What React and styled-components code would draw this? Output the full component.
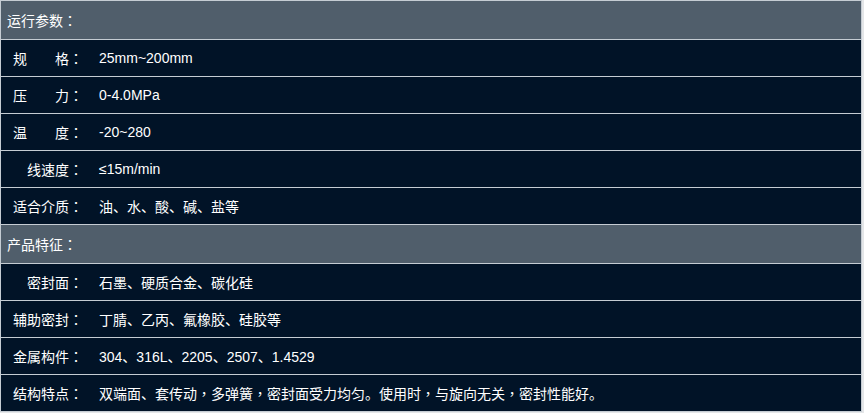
import React from 'react'
import styled, { createGlobalStyle } from 'styled-components'

const GlobalStyle = createGlobalStyle`
  html, body {
    margin: 0;
    padding: 0;
    background: #e4e6e8;
  }
  body {
    font-family: "Liberation Sans", "Noto Sans CJK SC", sans-serif;
    font-size: 14px;
  }
`

const sections = [
  {
    title: '运行参数',
    rows: [
      ['规　　格', '25mm~200mm'],
      ['压　　力', '0-4.0MPa'],
      ['温　　度', '-20~280'],
      ['线速度', '≤15m/min'],
      ['适合介质', '油、水、酸、碱、盐等'],
    ],
  },
  {
    title: '产品特征',
    rows: [
      ['密封面', '石墨、硬质合金、碳化硅'],
      ['辅助密封', '丁腈、乙丙、氟橡胶、硅胶等'],
      ['金属构件', '304、316L、2205、2507、1.4529'],
      ['结构特点', ['双端面、套传动', '，', '多弹簧', '，', '密封面受力均匀。使用时', '，', '与旋向无关', '，', '密封性能好。']],
    ],
  },
]

// centred full-width punctuation (colon, comma) as in the original page
const renderText = (parts) =>
  Array.isArray(parts)
    ? parts.map((p, i) => (i % 2 ? <Punct key={i}>{p}</Punct> : <span key={i}>{p}</span>))
    : parts

const App = () => {
  return (
    <>
      <GlobalStyle />
      <Table>
        {sections.map((s) => (
          <React.Fragment key={s.title}>
            <HeadRow>
              {s.title}
              <Punct>：</Punct>
            </HeadRow>
            {s.rows.map(([label, value]) => (
              <Row key={label}>
                <Label>
                  {label}
                  <Punct>：</Punct>
                </Label>
                <Value>{renderText(value)}</Value>
              </Row>
            ))}
          </React.Fragment>
        ))}
      </Table>
    </>
  )
}

export default App

const Table = styled.div`
  width: 862px;
  border: 1px solid #c5ccd3;
  border-bottom: none;
  box-sizing: border-box;
  background: #011327;
  color: #ffffff;
`

const HeadRow = styled.div`
  height: 38px;
  display: flex;
  align-items: center;
  padding-left: 6px;
  background: #505e6b;
  border-bottom: 1px solid #c5ccd3;

  & + & {
    height: 37px;
  }
`

const Row = styled.div`
  height: 36px;
  display: grid;
  grid-template-columns: 82px 1fr;
  column-gap: 16px;
  align-items: center;
  border-bottom: 1px solid #c5ccd3;
`

const Label = styled.span`
  text-align: right;
  white-space: nowrap;
`

const Value = styled.span`
  white-space: nowrap;
`

const Punct = styled.span`
  font-family: "Noto Sans CJK TC", "Noto Sans CJK SC", sans-serif;
`
